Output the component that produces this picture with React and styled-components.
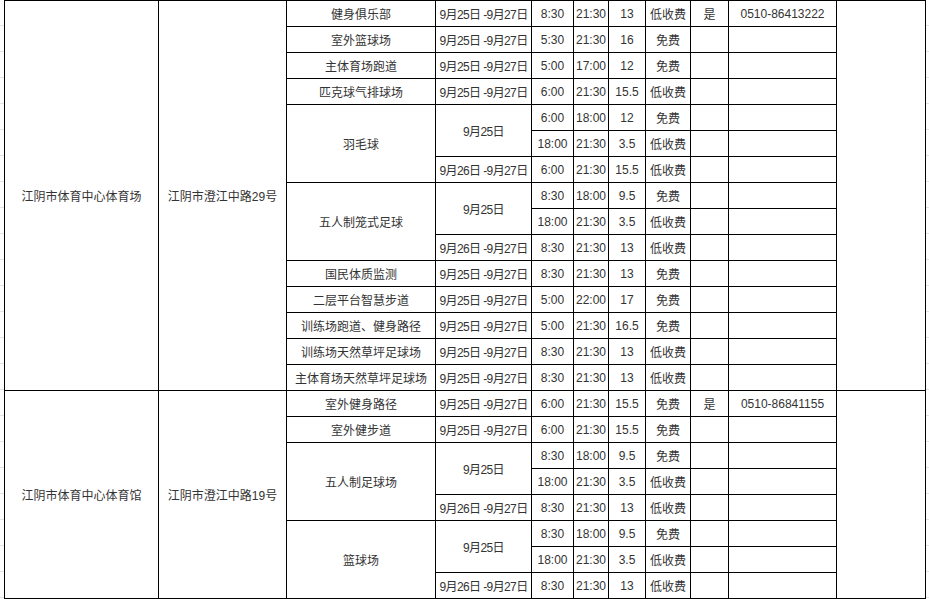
import React from "react";
import styled, { createGlobalStyle } from "styled-components";

const GlobalStyle = createGlobalStyle`
  html, body {
    margin: 0;
    padding: 0;
  }
  body {
    background: repeating-linear-gradient(
      to bottom,
      transparent 0,
      transparent 25px,
      #e4e4e4 25px,
      #e4e4e4 26px
    );
    min-height: 599px;
    font-family: "Liberation Sans", "Noto Sans CJK SC", sans-serif;
  }
`;

const Page = styled.div`
  padding-left: 4px;
`;

const Table = styled.table`
  table-layout: fixed;
  border-collapse: collapse;
  width: 922px;
  background: #fff;
`;

const Row = styled.tr`
  height: 26px;
`;

const Cell = styled.td`
  border: 1px solid #000;
  padding: 0;
  text-align: center;
  vertical-align: middle;
  font-size: 12px;
  color: #333;
  white-space: nowrap;
  overflow: hidden;
  letter-spacing: ${(p) => (p.$tight ? "-0.6px" : "normal")};
`;

const widths = [154, 128, 149, 96, 42, 35, 37, 45, 38, 108, 89];
const RANGE = "9月25日 -9月27日";

const single = (name, start, end, hours, fee) => ({
  name,
  dates: [{ date: RANGE, slots: [[start, end, hours, fee]] }],
});

const split = (name, early, late) => ({
  name,
  dates: [
    {
      date: "9月25日",
      slots: [
        [early, "18:00", "9.5", "免费"],
        ["18:00", "21:30", "3.5", "低收费"],
      ],
    },
    { date: "9月26日 -9月27日", slots: [[late, "21:30", "13", "低收费"]] },
  ],
});

const venues = [
  {
    name: "江阴市体育中心体育场",
    address: "江阴市澄江中路29号",
    phone: "0510-86413222",
    facilities: [
      single("健身俱乐部", "8:30", "21:30", "13", "低收费"),
      single("室外篮球场", "5:30", "21:30", "16", "免费"),
      single("主体育场跑道", "5:00", "17:00", "12", "免费"),
      single("匹克球气排球场", "6:00", "21:30", "15.5", "低收费"),
      {
        name: "羽毛球",
        dates: [
          {
            date: "9月25日",
            slots: [
              ["6:00", "18:00", "12", "免费"],
              ["18:00", "21:30", "3.5", "低收费"],
            ],
          },
          { date: "9月26日 -9月27日", slots: [["6:00", "21:30", "15.5", "低收费"]] },
        ],
      },
      split("五人制笼式足球", "8:30", "8:30"),
      single("国民体质监测", "8:30", "21:30", "13", "免费"),
      single("二层平台智慧步道", "5:00", "22:00", "17", "免费"),
      single("训练场跑道、健身路径", "5:00", "21:30", "16.5", "免费"),
      single("训练场天然草坪足球场", "8:30", "21:30", "13", "低收费"),
      single("主体育场天然草坪足球场", "8:30", "21:30", "13", "低收费"),
    ],
  },
  {
    name: "江阴市体育中心体育馆",
    address: "江阴市澄江中路19号",
    phone: "0510-86841155",
    facilities: [
      single("室外健身路径", "6:00", "21:30", "15.5", "免费"),
      single("室外健步道", "6:00", "21:30", "15.5", "免费"),
      split("五人制足球场", "8:30", "8:30"),
      split("篮球场", "8:30", "8:30"),
    ],
  },
];

function countSlots(facility) {
  return facility.dates.reduce((n, d) => n + d.slots.length, 0);
}

function VenueRows({ venue }) {
  const total = venue.facilities.reduce((n, f) => n + countSlots(f), 0);
  const rows = [];
  let index = 0;

  venue.facilities.forEach((facility) => {
    facility.dates.forEach((d, di) => {
      d.slots.forEach((slot, si) => {
        const first = index === 0;
        const firstOfFacility = di === 0 && si === 0;
        rows.push(
          <Row key={`${facility.name}-${di}-${si}`}>
            {first && <Cell rowSpan={total}>{venue.name}</Cell>}
            {first && <Cell rowSpan={total}>{venue.address}</Cell>}
            {firstOfFacility && (
              <Cell rowSpan={countSlots(facility)}>{facility.name}</Cell>
            )}
            {si === 0 && (
              <Cell rowSpan={d.slots.length} $tight>
                {d.date}
              </Cell>
            )}
            {slot.map((value, k) => (
              <Cell key={k}>{value}</Cell>
            ))}
            <Cell>{first ? "是" : ""}</Cell>
            <Cell>{first ? venue.phone : ""}</Cell>
            {first && <Cell rowSpan={total} />}
          </Row>
        );
        index += 1;
      });
    });
  });

  return rows;
}

export default function App() {
  return (
    <Page>
      <GlobalStyle />
      <Table>
        <colgroup>
          {widths.map((w, i) => (
            <col key={i} style={{ width: w }} />
          ))}
        </colgroup>
        <tbody>
          {venues.map((v) => (
            <VenueRows key={v.name} venue={v} />
          ))}
        </tbody>
      </Table>
    </Page>
  );
}
